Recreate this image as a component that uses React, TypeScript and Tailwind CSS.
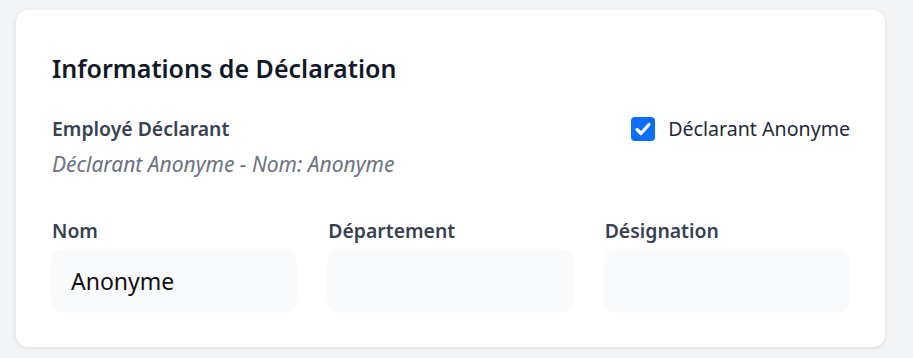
import React from "react";

export default function App() {
  return (
    <div className="min-h-[358px] bg-[#f4f5f7] pt-[10px] pl-[16px]" style={{ fontFamily: '"Noto Sans", sans-serif' }}>
      <div className="w-[869px] rounded-[12px] bg-white shadow-[0_1px_4px_rgba(0,0,0,0.12)] px-[36px] pt-[42px] pb-[35px]">
        <h2 className="text-[25px] leading-[32px] font-semibold text-[#111827]">Informations de Déclaration</h2>
        <div className="mt-[31px] flex items-start justify-between">
          <div>
            <div className="text-[19.4px] leading-[28px] font-semibold text-[#374151]">Employé Déclarant</div>
            <div className="mt-[7px] text-[21px] leading-[28px] italic text-[#6b7280]">Déclarant Anonyme - Nom: Anonyme</div>
          </div>
          <label className="flex items-center gap-[13px] -mr-[1px]">
            <span className="flex h-[24px] w-[24px] shrink-0 items-center justify-center rounded-[4px] bg-[#0d6efd]">
              <svg width="24" height="24" viewBox="0 0 24 24" fill="none">
                <path d="M6 12.5 L10 16.5 L18 7.5" stroke="white" strokeWidth="3.2" strokeLinecap="round" strokeLinejoin="round" />
              </svg>
            </span>
            <span className="text-[19.6px] leading-[28px] text-[#1f2937]">Déclarant Anonyme</span>
          </label>
        </div>
        <div className="mt-[39px] grid grid-cols-3 gap-[32px]">
          {[
            { label: "Nom", value: "Anonyme" },
            { label: "Département", value: "" },
            { label: "Désignation", value: "" },
          ].map((f) => (
            <div key={f.label} className="flex flex-col">
              <div className="text-[19.4px] leading-[28px] font-semibold text-[#374151]">{f.label}</div>
              <div className="mt-[5px] h-[62px] rounded-[10px] bg-[#f8fafc] shadow-[0_0_3px_rgba(0,0,0,0.04)] px-[19px] flex items-center text-[23px] text-[#111]">
                {f.value}
              </div>
            </div>
          ))}
        </div>
      </div>
    </div>
  );
}
